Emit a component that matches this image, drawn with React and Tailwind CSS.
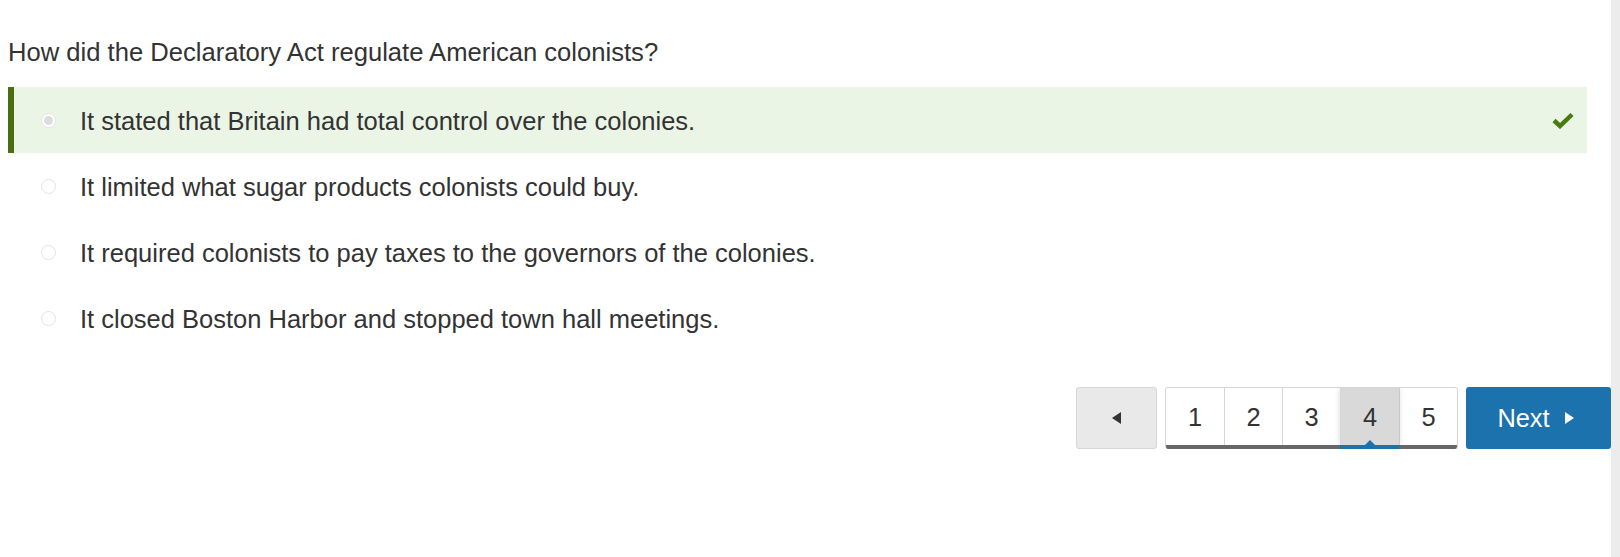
import React from 'react'

const options = [
  'It stated that Britain had total control over the colonies.',
  'It limited what sugar products colonists could buy.',
  'It required colonists to pay taxes to the governors of the colonies.',
  'It closed Boston Harbor and stopped town hall meetings.',
]

function Radio({ checked }) {
  return (
    <span className="flex h-[15px] w-[15px] items-center justify-center rounded-full border border-[#e3e3e3] bg-white">
      {checked && <span className="h-[9px] w-[9px] rounded-full bg-[#dcdcdc]" />}
    </span>
  )
}

export default function App() {
  return (
    <div className="flex h-[557px] w-full bg-white font-['Liberation_Sans',Arial,sans-serif] text-[#333]">
      <div className="flex-1">
        <div className="pl-2 pt-[36px] text-[25.6px] leading-[32px]">How did the Declaratory Act regulate American colonists?</div>

        <div className="mt-[19px] pl-2 pr-[24px]">
          {options.map((text, i) => (
            <div
              key={i}
              className={
                i === 0
                  ? 'flex h-[66px] items-center border-l-[6px] border-[#4b6e10] bg-[#ebf5e6]'
                  : 'flex h-[66px] items-center border-l-[6px] border-transparent'
              }
            >
              <div className="flex w-[66px] justify-center pl-[5px] pr-[2px]">
                <Radio checked={i === 0} />
              </div>
              <span className="flex-1 text-[25.5px] pt-[2px]">{text}</span>
              {i === 0 && (
                <svg className="mr-[13px] h-[17px] w-[22px]" viewBox="0 0 22 17" fill="none">
                  <path d="M2 8.5 L8 14 L20 2.5" stroke="#4b7a0f" strokeWidth="4.5" strokeLinejoin="miter" />
                </svg>
              )}
            </div>
          ))}
        </div>

        <div className="mt-[36px] flex justify-end">
          <div className="flex items-start gap-[8px]">
            <button className="flex h-[62px] w-[81px] items-center justify-center rounded-[3px] border border-[#d6d6d6] bg-[#e9e9e9]">
              <svg className="h-[12px] w-[10px]" viewBox="0 0 10 12"><path d="M9 0 L0 6 L9 12 Z" fill="#333" /></svg>
            </button>

            <div className="relative flex h-[62px] overflow-hidden rounded-[3px] border border-[#d6d6d6] border-b-0">
              {['1', '2', '3', '4', '5'].map((n, i) => (
                <div
                  key={n}
                  className={
                    n === '4'
                      ? 'relative flex h-[58px] w-[59px] items-center justify-center border-l border-[#d6d6d6] bg-[#d9d9d9] text-[25.4px] shadow-[0_0_6px_rgba(0,0,0,0.15)]'
                      : i === 0
                        ? 'flex h-[58px] w-[58px] items-center justify-center bg-white text-[25.4px]'
                        : 'flex h-[58px] w-[58px] items-center justify-center border-l border-[#d6d6d6] bg-white text-[25.4px]'
                  }
                >
                  {n}
                  {n === '4' && (
                    <span className="absolute bottom-0 left-1/2 h-0 w-0 -translate-x-1/2 border-x-[6px] border-b-[6px] border-x-transparent border-b-[#1b72ad]" />
                  )}
                </div>
              ))}
              <div className="absolute bottom-0 left-0 flex h-[4px] w-full">
                <div className="w-[174px] bg-[#666]" />
                <div className="w-[59px] bg-[#1b72ad]" />
                <div className="flex-1 bg-[#666]" />
              </div>
            </div>

            <button className="flex h-[62px] w-[145px] items-center justify-center gap-[14px] rounded-[3px] bg-[#1b72ad] pr-[6px] text-[25.4px] text-white">
              Next
              <svg className="h-[12px] w-[10px]" viewBox="0 0 10 12"><path d="M1 0 L10 6 L1 12 Z" fill="#fff" /></svg>
            </button>
          </div>
        </div>
      </div>
      <div className="w-[9px] bg-[#ececec]" />
    </div>
  )
}
